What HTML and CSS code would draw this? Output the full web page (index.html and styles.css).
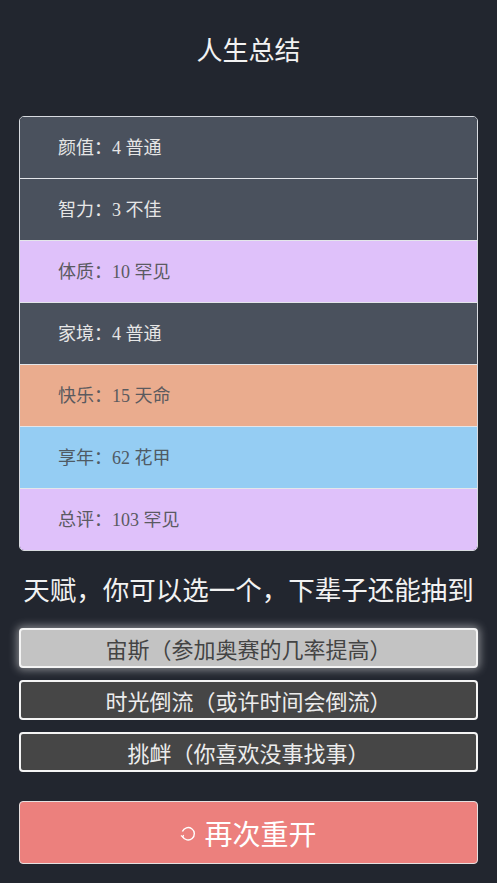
FILE: index.html
```html
<!DOCTYPE html>
<html lang="zh">
<head>
<meta charset="utf-8">
<link rel="stylesheet" href="styles.css">
</head>
<body>
<div class="page">
  <h1 class="title">人生总结</h1>
  <ul class="summary">
    <li class="row dark">颜值：4 普通</li>
    <li class="row dark">智力：3 不佳</li>
    <li class="row purple">体质：10 罕见</li>
    <li class="row dark">家境：4 普通</li>
    <li class="row orange">快乐：15 天命</li>
    <li class="row blue">享年：62 花甲</li>
    <li class="row purple">总评：103 罕见</li>
  </ul>
  <h2 class="subtitle">天赋，你可以选一个，下辈子还能抽到</h2>
  <div class="talents">
    <button class="talent selected">宙斯（参加奥赛的几率提高）</button>
    <button class="talent">时光倒流（或许时间会倒流）</button>
    <button class="talent">挑衅（你喜欢没事找事）</button>
  </div>
  <button class="restart">
    <svg class="icon" viewBox="0 0 16 16" width="16" height="16" aria-hidden="true">
      <path d="M2.6 10.6 A6.2 6.2 0 1 0 2.4 5.4" fill="none" stroke="#fff" stroke-width="1.4"/>
      <path d="M0.9 9.6 L2.7 10.9 L3.6 8.9" fill="none" stroke="#fff" stroke-width="1.2"/>
    </svg><span>再次重开</span>
  </button>
</div>
</body>
</html>
```
FILE: styles.css
```css
html, body {
  margin: 0;
  padding: 0;
  background: #22262f;
}
body {
  font-family: "Noto Sans CJK SC", "Noto Sans", sans-serif;
  color: #f0f0f0;
}
.page {
  width: 497px;
  height: 883px;
  box-sizing: border-box;
  padding: 0 19px;
  display: flex;
  flex-direction: column;
}
.title {
  margin: 0;
  height: 98px;
  line-height: 98px;
  text-align: center;
  font-size: 26px;
  font-weight: 400;
  color: #f2f2f2;
}
.summary {
  list-style: none;
  margin: 18px 0 0;
  padding: 0;
  border: 1px solid #d8dbe0;
  border-radius: 5px;
  overflow: hidden;
}
.row {
  height: 61px;
  line-height: 62px;
  padding-left: 38px;
  font-family: "Liberation Serif", "Noto Sans CJK SC", serif;
  font-size: 18px;
}
.row + .row {
  border-top: 1px solid #e4e6ea;
}
.dark {
  background: #4a515d;
  color: #e6e6e6;
}
.purple {
  background: #dfc1fa;
  color: #5b5a62;
}
.orange {
  background: #eaac8e;
  color: #5b5a5e;
}
.blue {
  background: #95cdf3;
  color: #4f5a64;
}
.subtitle {
  margin: 18px 0 19px;
  height: 40px;
  line-height: 40px;
  text-align: center;
  font-size: 26.5px;
  font-weight: 400;
  color: #f2f2f2;
  white-space: nowrap;
}
.talents {
  display: flex;
  flex-direction: column;
  gap: 12px;
}
.talent {
  height: 40px;
  margin: 0;
  padding: 0;
  border: 2px solid #f4f4f4;
  border-radius: 4px;
  background: #464646;
  color: #ececec;
  font-family: "Noto Sans CJK SC", sans-serif;
  font-size: 22px;
  line-height: 36px;
  text-align: center;
}
.talent.selected {
  background: #c3c3c3;
  color: #444;
  box-shadow: 0 0 8px 2px rgba(255, 255, 255, 0.45);
}
.restart {
  margin: 29px 0 0;
  height: 63px;
  border: 1px solid #e6e0e0;
  border-radius: 4px;
  background: #ec807d;
  color: #fff;
  font-family: "Noto Sans CJK SC", sans-serif;
  font-size: 28px;
  display: flex;
  align-items: center;
  justify-content: center;
  padding: 0;
}
.icon {
  margin-right: 8px;
  margin-top: 3px;
}
```
